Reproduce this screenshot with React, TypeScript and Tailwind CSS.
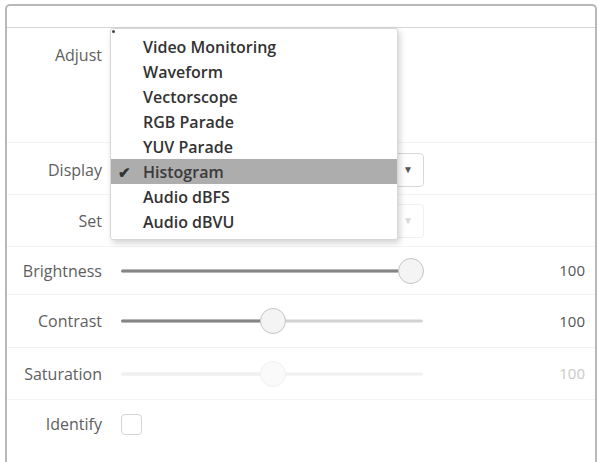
import React from "react";

const font = { fontFamily: '"Open Sans", "Noto Sans", sans-serif' };

const items = [
  "Video Monitoring",
  "Waveform",
  "Vectorscope",
  "RGB Parade",
  "YUV Parade",
  "Histogram",
  "Audio dBFS",
  "Audio dBVU",
];

function Label({ children }: { children: React.ReactNode }) {
  return (
    <div className="w-[95px] shrink-0 text-right text-[16px] leading-[22px] text-[#5e5e5e]">
      {children}
    </div>
  );
}

function Slider({ pos, disabled }: { pos: number; disabled?: boolean }) {
  // pos is the thumb centre in px from the left of the 302px track
  return (
    <div className="relative h-[26px] w-[302px]">
      <div
        className={`absolute left-0 right-0 top-1/2 h-[3px] -translate-y-1/2 rounded-full ${disabled ? "bg-[#f0f0f0]" : "bg-[#d2d2d2]"}`}
      />
      <div
        className={`absolute left-0 top-1/2 h-[3px] -translate-y-1/2 rounded-full ${disabled ? "bg-[#f0f0f0]" : "bg-[#858585]"}`}
        style={{ width: pos }}
      />
      <div
        className={`absolute top-0 h-[26px] w-[26px] -translate-x-1/2 rounded-full border ${disabled ? "border-[#f0f0f0] bg-[#fafafa]" : "border-[#c4c4c4] bg-[#f4f4f4]"}`}
        style={{ left: pos }}
      />
    </div>
  );
}

function Select({ disabled }: { disabled?: boolean }) {
  return (
    <div
      className={`flex h-[34px] w-[304px] items-center justify-end rounded-[4px] border pr-[10px] ${disabled ? "border-[#f0f0f0]" : "border-[#d8d8d8]"}`}
    >
      <span className={`text-[10px] ${disabled ? "text-[#d8d8d8]" : "text-[#555]"}`}>▼</span>
    </div>
  );
}

export default function App() {
  return (
    <div className="h-[462px] w-[598px] overflow-hidden bg-white" style={font}>
      <div className="relative ml-[5px] mt-[4px] h-[470px] w-[592px] rounded-t-[5px] border-2 border-b-0 border-[#b8b8b8]">
        <div className="h-[22px] border-b border-[#d6d6d6]" />

        {/* Adjust */}
        <div className="flex h-[115px] items-start border-b border-[#f3f3f3] pt-[16px]">
          <Label>Adjust</Label>
        </div>

        {/* Display */}
        <div className="flex h-[52px] items-center gap-[18px] border-b border-[#f3f3f3] pt-[2px]">
          <Label>Display</Label>
          <Select />
        </div>

        {/* Set */}
        <div className="flex h-[52px] items-center gap-[18px] border-b border-[#f3f3f3]">
          <Label>Set</Label>
          <Select disabled />
        </div>

        {/* Brightness */}
        <div className="flex h-[48px] items-center gap-[19px] border-b border-[#f3f3f3]">
          <Label>Brightness</Label>
          <Slider pos={290} />
          <div className="ml-auto pr-[10px] text-[15px] text-[#555]">100</div>
        </div>

        {/* Contrast */}
        <div className="flex h-[53px] items-center gap-[19px] border-b border-[#f3f3f3]">
          <Label>Contrast</Label>
          <Slider pos={152} />
          <div className="ml-auto pr-[10px] text-[15px] text-[#555]">100</div>
        </div>

        {/* Saturation */}
        <div className="flex h-[52px] items-center gap-[19px] border-b border-[#f3f3f3]">
          <Label>Saturation</Label>
          <Slider pos={152} disabled />
          <div className="ml-auto pr-[10px] text-[15px] text-[#c8c8c8]">100</div>
        </div>

        {/* Identify */}
        <div className="flex h-[48px] items-center gap-[19px]">
          <Label>Identify</Label>
          <div className="h-[21px] w-[21px] rounded-[4px] border border-[#d4d4d4] bg-white" />
        </div>

        {/* Open display menu */}
        <div className="absolute left-[103px] top-[22px] w-[288px] rounded-[3px] border border-[#d8d8d8] bg-white py-[5px] shadow-[2px_3px_6px_rgba(0,0,0,0.18)]">
          <div className="absolute left-[1px] top-[1px] h-[3px] w-[3px] rounded-full bg-[#444]" />
          {items.map((it) => {
            const sel = it === "Histogram";
            return (
              <div
                key={it}
                className={`relative flex h-[25px] items-center pl-[32px] text-[16px] font-semibold ${sel ? "bg-[#adadad] text-[#3a3a3a]" : "text-[#333]"}`}
              >
                {sel && (
                  <span className="absolute left-[7px] top-[2px] text-[15px] text-[#333]">✔</span>
                )}
                {it}
              </div>
            );
          })}
        </div>
      </div>
    </div>
  );
}
